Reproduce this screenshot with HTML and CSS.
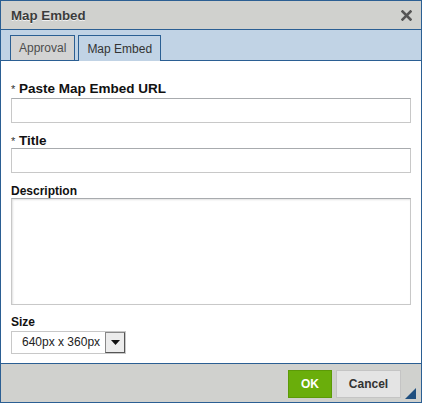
FILE: index.html
```html
<!DOCTYPE html>
<html>
<head>
<meta charset="utf-8">
<link rel="stylesheet" href="styles.css">
</head>
<body>
<div class="dialog">
  <div class="titlebar">
    <span class="title">Map Embed</span>
    <svg class="close" width="11" height="11" viewBox="0 0 11 11"><path d="M1.5 1.5L9.5 9.5M9.5 1.5L1.5 9.5" stroke="#555" stroke-width="2.6" stroke-linecap="square"/></svg>
  </div>
  <div class="tabbar">
    <div class="tab">Approval</div>
    <div class="tab active">Map Embed</div>
  </div>
  <div class="content">
    <div class="label big l1"><span class="req">*</span> Paste Map Embed URL</div>
    <div class="input"></div>
    <div class="label big l2"><span class="req">*</span> Title</div>
    <div class="input"></div>
    <div class="label l3">Description</div>
    <div class="textarea"></div>
    <div class="label l4">Size</div>
    <div class="select">
      <span class="sel-text">640px x 360px</span>
      <span class="sel-btn"><svg width="9" height="5" viewBox="0 0 9 5"><path d="M0 0H9L4.5 5Z" fill="#111"/></svg></span>
    </div>
  </div>
  <div class="footer">
    <div class="btn ok">OK</div>
    <div class="btn cancel">Cancel</div>
    <svg class="grip" width="11" height="11" viewBox="0 0 11 11"><path d="M11 0V11H0Z" fill="#1f4f7f"/></svg>
  </div>
</div>
</body>
</html>
```
FILE: styles.css
```css
html, body { margin: 0; padding: 0; background: #fff; }
body { font-family: "Liberation Sans", Arial, sans-serif; }
.dialog {
  width: 422px; height: 403px; box-sizing: border-box;
  border: 1px solid #2b5f93;
  display: flex; flex-direction: column;
  background: #fff;
}
.titlebar {
  height: 28px; flex: none;
  background: #d0d1ce;
  border-bottom: 1px solid #2b5f93;
  display: flex; align-items: center; justify-content: space-between;
  padding: 0 9px 0 10px;
}
.title { font-size: 13.3px; font-weight: bold; color: #3c3c3c; text-shadow: 0 1px 0 #f2f2f2; }
.close { display: block; margin-top: 1px; }
.tabbar {
  height: 30px; flex: none;
  background: #c1d3e5;
  border-bottom: 1px solid #2b5f93;
  display: flex; align-items: flex-end;
  padding-left: 9px; gap: 3px;
}
.tab {
  height: 25px; box-sizing: border-box;
  border: 1px solid #2b5f93; border-bottom: none;
  background: #d3d3d3;
  font-size: 12px; color: #4d4d4d;
  padding: 0 8px; line-height: 25px;
}
.tab.active {
  background: #c1d3e5; color: #333;
  height: 26px; margin-bottom: -1px; line-height: 26px;
  padding: 0 8px 0 8px;
}
.content {
  flex: 1;
  padding: 21px 10px 0 10px;
  display: flex; flex-direction: column;
}
.label { font-size: 12px; font-weight: bold; color: #111; line-height: 14px; height: 14px; white-space: nowrap; }
.label.big { font-size: 13.5px; }
.req { font-weight: normal; font-size: 11px; color: #333; vertical-align: top; }
.l1 { margin-bottom: 2px; }
.l2 { margin-top: 11px; margin-bottom: 0; }
.l3 { margin-top: 11px; margin-bottom: 0; }
.l4 { margin-top: 10px; margin-bottom: 2px; }
.input {
  height: 25px; box-sizing: border-box; width: 400px;
  border: 1px solid #c8c8c8; border-top-color: #a8abae;
  background: #fff;
}
.textarea {
  height: 107px; box-sizing: border-box; width: 400px;
  border: 1px solid #c8c8c8; border-top-color: #a8abae;
  box-shadow: inset 1px 1px 2px rgba(0,0,0,0.12);
  background: #fff;
}
.select {
  width: 115px; height: 23px; box-sizing: border-box;
  border: 1px solid #c8c8c8;
  display: flex; align-items: stretch;
  font-size: 12px; color: #222;
}
.sel-text { flex: 1; line-height: 21px; padding-left: 10px; }
.sel-btn {
  width: 20px; box-sizing: border-box;
  border: 1px solid #555; border-top-color: #888; border-left-color: #888;
  background: #ececec;
  display: flex; align-items: center; justify-content: center;
  margin: 0;
}
.footer {
  height: 38px; flex: none;
  background: #d0d1ce;
  border-top: 1px solid #2b5f93;
  display: flex; align-items: center; justify-content: flex-end;
  padding-right: 20px; gap: 4px;
  position: relative;
}
.btn {
  height: 28px; box-sizing: border-box;
  font-size: 12px; font-weight: bold;
  display: flex; align-items: center; justify-content: center;
  margin-top: 2px;
}
.ok { width: 44px; background: #6aae0b; color: #fff; border: 1px solid #5c9a07; }
.cancel { width: 65px; background: #e4e4e4; color: #333; border: 1px solid #c4c4c4; }
.grip { position: absolute; right: 5px; bottom: 3px; }
```
